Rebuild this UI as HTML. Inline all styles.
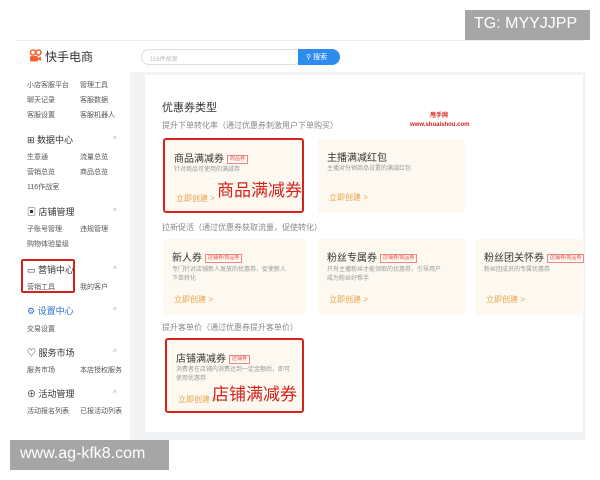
<!DOCTYPE html>
<html><head><meta charset="utf-8"><style>
*{margin:0;padding:0;box-sizing:border-box}
body{width:600px;height:480px;background:#fff;position:relative;overflow:hidden;font-family:"Liberation Sans","Noto Sans CJK SC",sans-serif;color:#333}
.a{position:absolute}
.sb{font-size:7px;color:#555}
.h{font-size:9px;color:#333}
.card{position:absolute;background:#fdf9f1;border-radius:3px}
.card .t{position:absolute;left:9px;top:10px;font-size:10px;color:#333;white-space:nowrap}
.card .d{position:absolute;left:9px;font-size:6px;color:#999;line-height:9px}
.card .c{position:absolute;left:11px;font-size:8px;color:#e8a24a}
.tag{display:inline-block;border:1px solid #e88;color:#e55;font-size:5px;padding:0 2px;margin-left:3px;vertical-align:2px;line-height:7px}
.red{border:2px solid #d4231c}
.big{position:absolute;color:#d4231c;font-size:17px;white-space:nowrap}
.sec{position:absolute;left:162px;font-size:8px;color:#888}
.ch{position:absolute;left:113px;font-size:8px;color:#aaa}
</style></head><body>
<div class="a" style="left:15px;top:40px;width:570px;height:1px;background:#eee"></div>
<div class="a" style="left:130px;top:72px;width:455px;height:368px;background:#f2f3f5"></div>
<div class="a" style="left:145px;top:75px;width:438px;height:357px;background:#fff"></div>
<div class="a" style="left:29px;top:49px;width:13px;height:13px">
<svg width="13" height="13" viewBox="0 0 13 13"><circle cx="4" cy="3.5" r="2.5" fill="none" stroke="#f6622c" stroke-width="1.6"/><circle cx="9.5" cy="3.5" r="2.5" fill="none" stroke="#f6622c" stroke-width="1.6"/><rect x="1" y="7" width="8" height="5.5" rx="1.5" fill="#f6622c"/><path d="M9 9 L12 7.5 L12 12 L9 10.5Z" fill="#f6622c"/></svg></div>
<div class="a" style="left:45px;top:48px;font-size:12px;color:#333">快手电商</div>
<div class="a" style="left:141px;top:49px;width:160px;height:16px;border:1px solid #ddd;border-radius:8px;font-size:6px;color:#bbb;padding:4px 0 0 8px">116件故案</div>
<div class="a" style="left:298px;top:49px;width:42px;height:16px;background:#2d8cf0;border-radius:0 8px 8px 0;color:#fff;font-size:7px;padding:3px 0 0 8px">⚲ 搜索</div>
<div class="a sb" style="left:27px;top:80px">小店客服平台</div><div class="a sb" style="left:80px;top:80px">管理工具</div>
<div class="a sb" style="left:27px;top:95px">聊天记录</div><div class="a sb" style="left:80px;top:95px">客服数据</div>
<div class="a sb" style="left:27px;top:110px">客服设置</div><div class="a sb" style="left:80px;top:110px">客服机器人</div>
<div class="a h" style="left:27px;top:133px">⊞ 数据中心</div><div class="ch" style="top:135px">^</div>
<div class="a sb" style="left:27px;top:152px">生意通</div><div class="a sb" style="left:80px;top:152px">流量总览</div>
<div class="a sb" style="left:27px;top:167px">营销总览</div><div class="a sb" style="left:80px;top:167px">商品总览</div>
<div class="a sb" style="left:27px;top:182px">116作战室</div>
<div class="a h" style="left:27px;top:205px">▣ 店铺管理</div><div class="ch" style="top:207px">^</div>
<div class="a sb" style="left:27px;top:224px">子账号管理</div><div class="a sb" style="left:80px;top:224px">违规管理</div>
<div class="a sb" style="left:27px;top:239px">购物体验星级</div>
<div class="a" style="left:21px;top:259px;width:54px;height:34px;border:2px solid #d4231c;border-radius:2px"></div>
<div class="a h" style="left:27px;top:263px">▭ 营销中心</div><div class="ch" style="top:265px">^</div>
<div class="a sb" style="left:27px;top:282px">营销工具</div><div class="a sb" style="left:80px;top:282px">我的客户</div>
<div class="a h" style="left:27px;top:304px;color:#2d6fc7">⚙ 设置中心</div><div class="ch" style="top:306px">^</div>
<div class="a sb" style="left:27px;top:324px">交易设置</div>
<div class="a h" style="left:27px;top:346px">♡ 服务市场</div><div class="ch" style="top:348px">^</div>
<div class="a sb" style="left:27px;top:365px">服务市场</div><div class="a sb" style="left:80px;top:365px">本店授权服务</div>
<div class="a h" style="left:27px;top:387px">⊕ 活动管理</div><div class="ch" style="top:389px">^</div>
<div class="a sb" style="left:27px;top:406px">活动报名列表</div><div class="a sb" style="left:80px;top:406px">已报活动列表</div>
<div class="a" style="left:162px;top:99px;font-size:11px;color:#333">优惠券类型</div>
<div class="sec" style="top:120px">提升下单转化率（通过优惠券刺激用户下单购买）</div>
<div class="a" style="left:430px;top:110px;font-size:6px;color:#d4231c;font-weight:bold">甩手网</div>
<div class="a" style="left:410px;top:122px;font-size:6px;color:#d4231c;font-weight:bold">www.shuaishou.com</div>
<div class="card red" style="left:163px;top:138px;width:141px;height:75px"><div class="t">商品满减券<span class="tag">商品券</span></div><div class="d" style="top:26px">针对商品可使用的满减券</div><div class="c" style="top:53px">立即创建 &gt;</div><div class="big" style="left:52px;top:36px">商品满减券</div></div>
<div class="card" style="left:318px;top:139px;width:147px;height:74px"><div class="t">主播满减红包</div><div class="d" style="top:26px">主播对分销商品设置的满减红包</div><div class="c" style="top:53px">立即创建 &gt;</div></div>
<div class="sec" style="top:222px">拉新促活（通过优惠券获取流量，促使转化）</div>
<div class="card" style="left:163px;top:239px;width:143px;height:76px"><div class="t">新人券<span class="tag">店铺券/商品券</span></div><div class="d" style="top:27px">专门针对店铺新人发放的优惠券，促使新人<br>下单转化</div><div class="c" style="top:55px">立即创建 &gt;</div></div>
<div class="card" style="left:318px;top:239px;width:147px;height:76px"><div class="t">粉丝专属券<span class="tag">店铺券/商品券</span></div><div class="d" style="top:27px">只有主播粉丝才能领取的优惠券，引导用户<br>成为粉丝好帮手</div><div class="c" style="top:55px">立即创建 &gt;</div></div>
<div class="card" style="left:475px;top:239px;width:109px;height:76px"><div class="t">粉丝团关怀券<span class="tag">店铺券/商品券</span></div><div class="d" style="top:27px">粉丝团成员的专属优惠券</div><div class="c" style="top:55px">立即创建 &gt;</div></div>
<div class="sec" style="top:322px">提升客单价（通过优惠券提升客单价）</div>
<div class="card red" style="left:165px;top:338px;width:139px;height:75px"><div class="t">店铺满减券<span class="tag">店铺券</span></div><div class="d" style="top:26px">消费者在店铺内消费达到一定金额后，即可<br>使用优惠券</div><div class="c" style="top:54px">立即创建 &gt;</div><div class="big" style="left:45px;top:40px">店铺满减券</div></div>
<div class="a" style="left:465px;top:10px;width:125px;height:30px;background:#a6a6a6;color:#fff;font-size:16px;padding:5px 0 0 9px">TG: MYYJJPP</div>
<div class="a" style="left:10px;top:440px;width:159px;height:30px;background:#a6a6a6;color:#fff;font-size:16px;padding:5px 0 0 10px">www.ag-kfk8.com</div>
</body></html>
